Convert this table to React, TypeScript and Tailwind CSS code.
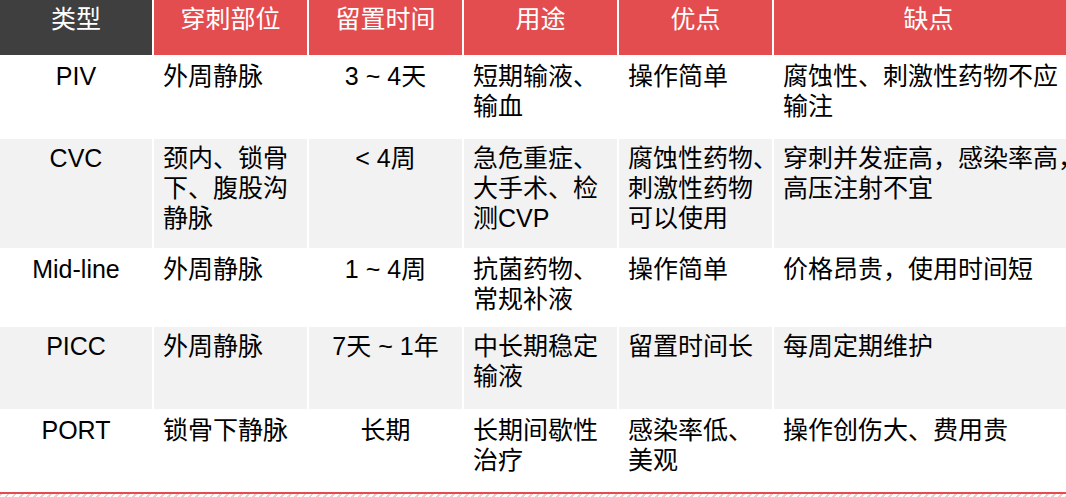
const headers = ["类型", "穿刺部位", "留置时间", "用途", "优点", "缺点"];

type Row = { h: string; bg: string; cells: string[][] };

const rows: Row[] = [
  {
    h: "h-[80px]",
    bg: "bg-white",
    cells: [["PIV"], ["外周静脉"], ["3 ~ 4天"], ["短期输液、", "输血"], ["操作简单"], ["腐蚀性、刺激性药物不应", "输注"]],
  },
  {
    h: "h-[109px]",
    bg: "bg-[#f2f2f2]",
    cells: [
      ["CVC"],
      ["颈内、锁骨", "下、腹股沟", "静脉"],
      ["< 4周"],
      ["急危重症、", "大手术、检", "测CVP"],
      ["腐蚀性药物、", "刺激性药物", "可以使用"],
      ["穿刺并发症高，感染率高，", "高压注射不宜"],
    ],
  },
  {
    h: "h-[75px]",
    bg: "bg-white",
    cells: [["Mid-line"], ["外周静脉"], ["1 ~ 4周"], ["抗菌药物、", "常规补液"], ["操作简单"], ["价格昂贵，使用时间短"]],
  },
  {
    h: "h-[82px]",
    bg: "bg-[#f2f2f2]",
    cells: [["PICC"], ["外周静脉"], ["7天 ~ 1年"], ["中长期稳定", "输液"], ["留置时间长"], ["每周定期维护"]],
  },
  {
    h: "h-[81px]",
    bg: "bg-white",
    cells: [["PORT"], ["锁骨下静脉"], ["长期"], ["长期间歇性", "治疗"], ["感染率低、", "美观"], ["操作创伤大、费用贵"]],
  },
];

export default function App() {
  return (
    <div className="w-[1066px] h-[497px] overflow-hidden bg-white font-['Liberation_Sans','Noto_Sans_CJK_SC',sans-serif] text-[25px] leading-[30px] text-black">
      <div className="grid grid-cols-[152px_153px_153px_153px_153px_1fr] gap-x-[2px] gap-y-[2px]">
        {headers.map((t, i) => (
          <div
            key={t}
            className={`h-[55px] pt-[4px] text-center text-white ${i === 0 ? "bg-[#3f3f3f]" : "bg-[#e44d4f]"}`}
          >
            {t}
          </div>
        ))}
        {rows.map((r, ri) =>
          r.cells.map((lines, ci) => (
            <div
              key={`${ri}-${ci}`}
              className={`${r.h} ${r.bg} pt-[4px] whitespace-nowrap ${
                ci === 0 || ci === 2 ? "text-center" : "pl-[9px]"
              }`}
            >
              {lines.map((l) => (
                <div key={l}>{l}</div>
              ))}
            </div>
          ))
        )}
      </div>
      <div className="h-[2px] bg-[#e44d4f]" />
      <div className="h-[3px] bg-[repeating-linear-gradient(135deg,#f6c9ca_0px,#f6c9ca_2px,#ffffff_2px,#ffffff_5px)]" />
    </div>
  );
}
